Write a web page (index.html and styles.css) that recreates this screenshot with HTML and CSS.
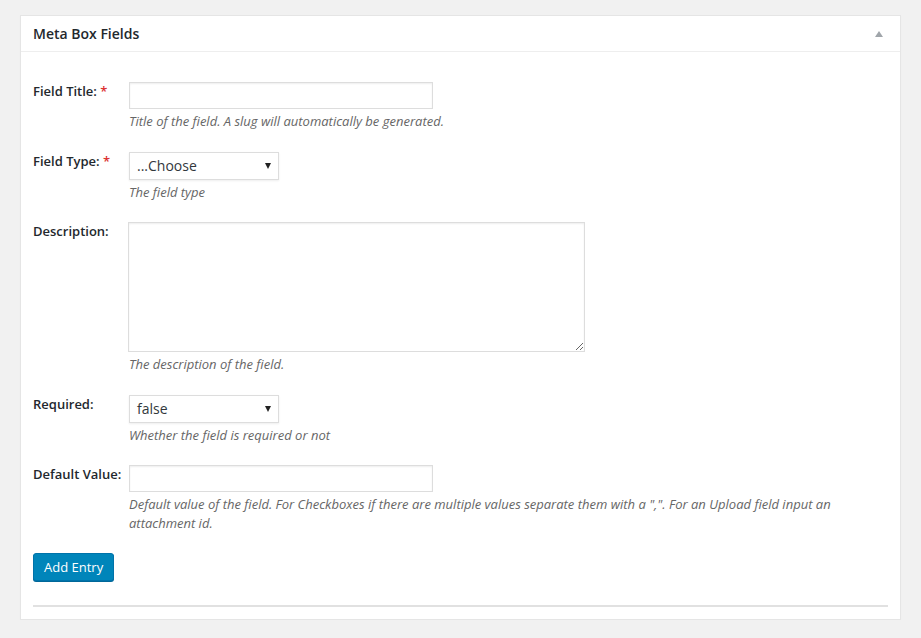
FILE: index.html
```
<!DOCTYPE html>
<html>
<head>
<meta charset="utf-8">
<link rel="stylesheet" href="styles.css">
</head>
<body>
<div class="postbox">
  <div class="hndle">
    <h2 class="title">Meta Box Fields</h2>
    <span class="toggle"></span>
  </div>
  <div class="inside">
    <div class="row">
      <label class="lbl">Field Title: <span class="req">*</span></label>
      <div class="field">
        <input type="text" class="text">
        <p class="desc">Title of the field. A slug will automatically be generated.</p>
      </div>
    </div>
    <div class="row">
      <label class="lbl">Field Type: <span class="req">*</span></label>
      <div class="field">
        <div class="select"><span>...Choose</span><span class="arrow"></span></div>
        <p class="desc">The field type</p>
      </div>
    </div>
    <div class="row">
      <label class="lbl">Description:</label>
      <div class="field">
        <textarea class="area"></textarea>
        <p class="desc">The description of the field.</p>
      </div>
    </div>
    <div class="row">
      <label class="lbl">Required:</label>
      <div class="field">
        <div class="select"><span>false</span><span class="arrow"></span></div>
        <p class="desc">Whether the field is required or not</p>
      </div>
    </div>
    <div class="row last">
      <label class="lbl">Default Value:</label>
      <div class="field">
        <input type="text" class="text">
        <p class="desc">Default value of the field. For Checkboxes if there are multiple values separate them with a ",". For an Upload field input an attachment id.</p>
      </div>
    </div>
    <button class="button">Add Entry</button>
    <div class="rule"></div>
  </div>
</div>
</body>
</html>
```
FILE: styles.css
```
html, body {
  margin: 0;
  padding: 0;
  background: #f1f1f1;
}
body {
  padding: 15px 20px 0 20px;
  font-family: "Open Sans", "DejaVu Sans", sans-serif;
  color: #23282d;
}
.postbox {
  width: 879px;
  background: #fff;
  border: 1px solid #e5e5e5;
  box-shadow: 0 1px 1px rgba(0,0,0,.04);
}
.hndle {
  display: flex;
  align-items: center;
  justify-content: space-between;
  padding: 8px 12px;
  border-bottom: 1px solid #eee;
  height: 19px;
}
.title {
  margin: 0;
  font-size: 14px;
  font-weight: 600;
  line-height: 19px;
  color: #23282d;
}
.toggle {
  width: 0;
  height: 0;
  border-left: 4px solid transparent;
  border-right: 4px solid transparent;
  border-bottom: 6px solid #a0a5aa;
  margin-right: 5px;
}
.inside {
  padding: 30px 12px 12px 12px;
}
.row {
  display: grid;
  grid-template-columns: 96px 1fr;
  margin-bottom: 20.5px;
}
.row.last {
  margin-bottom: 19.5px;
}
.lbl {
  font-size: 13px;
  font-weight: 600;
  line-height: 17px;
  padding-top: 1px;
  color: #23282d;
}
.req {
  color: #dc3232;
}
.field {
  display: flex;
  flex-direction: column;
  align-items: flex-start;
}
.text {
  box-sizing: border-box;
  width: 304px;
  height: 27px;
  border: 1px solid #ddd;
  box-shadow: inset 0 1px 2px rgba(0,0,0,.07);
  margin: 0;
  padding: 3px 5px;
  font-family: inherit;
  font-size: 14px;
  outline: none;
}
.select {
  box-sizing: border-box;
  width: 150px;
  height: 28px;
  border: 1px solid #ddd;
  box-shadow: 0 1px 2px rgba(0,0,0,.07);
  display: flex;
  align-items: center;
  justify-content: space-between;
  padding: 0 5px 0 7px;
  font-size: 14px;
  color: #32373c;
  background: #fff;
}
.arrow {
  width: 0;
  height: 0;
  border-left: 3.5px solid transparent;
  border-right: 3.5px solid transparent;
  border-top: 6px solid #222;
  margin-right: 2px;
}
.area {
  box-sizing: border-box;
  width: 457px;
  height: 130px;
  margin: 0 0 0 -1px;
  border: 1px solid #ddd;
  box-shadow: inset 0 1px 2px rgba(0,0,0,.07);
  resize: both;
  font-family: inherit;
  outline: none;
}
.desc {
  margin: 3px 0 0 0;
  font-size: 13px;
  font-style: italic;
  line-height: 19px;
  color: #666;
  max-width: 720px;
}
.button {
  display: block;
  box-sizing: border-box;
  height: 28px;
  padding: 0 10px 1px;
  background: #0085ba;
  border: 1px solid #0073aa;
  border-radius: 3px;
  box-shadow: 0 1px 0 #006799;
  color: #fff;
  font-family: inherit;
  font-size: 13px;
  line-height: 26px;
  cursor: pointer;
}
.rule {
  margin-top: 24px;
  height: 2px;
  background: #e1e1e1;
}
```
